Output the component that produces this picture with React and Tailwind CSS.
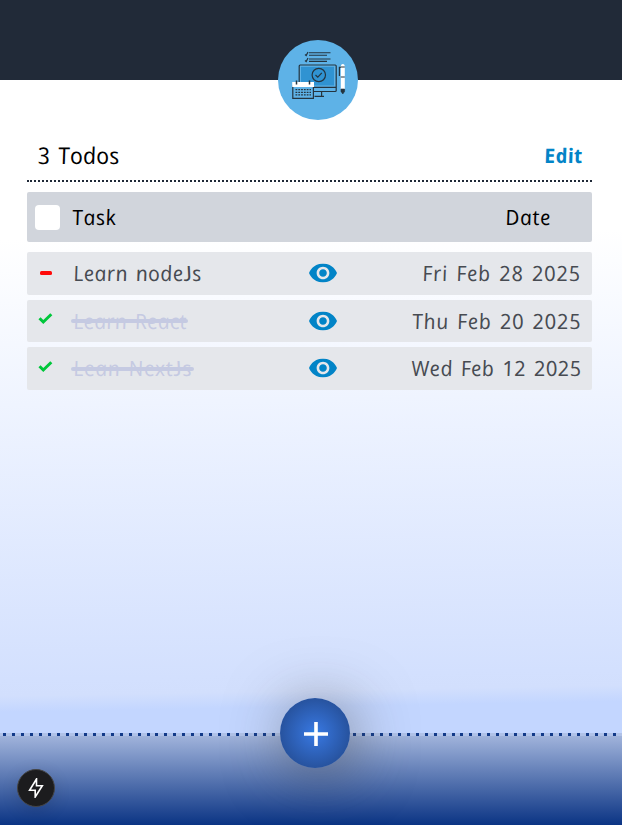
const todos = [
  { name: 'Learn nodeJs', date: 'Fri Feb 28 2025', done: false, height: 'h-[43px]', nameTrack: 'tracking-[0.35px] [word-spacing:2px]', dateTrack: 'tracking-[0.7px] [word-spacing:2px]' },
  { name: 'Learn React', date: 'Thu Feb 20 2025', done: true, height: 'h-[42px]', nameTrack: 'tracking-[0.2px] [word-spacing:2px]', dateTrack: 'tracking-[0.65px] [word-spacing:2px]' },
  { name: 'Lean NextJs', date: 'Wed Feb 12 2025', done: true, height: 'h-[43px]', nameTrack: 'tracking-[0.65px] [word-spacing:2px]', dateTrack: 'tracking-[0.35px] [word-spacing:2px]' },
];

// Italic letterforms stood upright give the rounded, handwritten look.
// The capital J comes from Lato, whose J sits on the baseline.
function Hand({ className = '', children }) {
  const [before, after] = children.split('J');
  return (
    <span className={`inline-block skew-x-[10deg] whitespace-nowrap font-['Open_Sans',sans-serif] italic ${className}`}>
      {before}
      {after !== undefined && <span className="font-['Lato',sans-serif] leading-[0]">J</span>}
      {after}
    </span>
  );
}

function Logo() {
  return (
    <svg className="block h-20 w-20" viewBox="0 0 80 80" fill="none" stroke="#24343f" strokeWidth="1.2">
      <circle cx="40" cy="40" r="40" fill="#5eb2e7" stroke="none" />
      <path d="M27 14.5l1.2 1L30 12M27 20.5l1.2 1L30 18" strokeWidth="1.2" />
      <path d="M31 12.8h21.5M31 15.2h18M31 19h21.5M31 21.4h18" strokeWidth="1.1" />
      <rect x="21.2" y="25" width="37" height="26.5" rx="1" fill="#5eb2e7" />
      <rect x="23" y="26.8" width="33" height="18.7" fill="#3093d2" stroke="none" />
      <path d="M21 47.3h37M43.6 51.5v4.5M36.5 56.3h9.5" />
      <circle cx="40.8" cy="35" r="6.7" />
      <path d="M37.5 35l2.3 2.2 4-4.4" />
      <path d="M14.8 46h20.6v12.4H14.8z" fill="#5eb2e7" />
      <path d="M14.2 42h21.8v5H14.2z" fill="#fff" stroke="none" />
      <path d="M18.5 40.5v4M31.5 40.5v4" strokeWidth="1.5" />
      <path d="M17.5 49.7h15.5M17.5 52.3h15.5M17.5 54.9h15.5" strokeDasharray="1.8 1" strokeWidth="1.2" />
      <path d="M61.4 36v-8.6h2" />
      <path d="M62.8 27q0-3 2-3t2 3v22h-4z" fill="#fff" stroke="none" />
      <path d="M62.8 27h4M62.8 37h4" strokeWidth="1" />
      <path d="M63 49h3.6v2.4L64.8 54 63 51.4z" fill="#24343f" strokeWidth=".6" />
    </svg>
  );
}

function StatusIcon({ done }) {
  return done ? (
    <svg className="block h-3.5 w-4 -translate-y-[2.5px] translate-x-[0.5px]" viewBox="0 0 16 14" fill="none" stroke="#00c73b" strokeWidth="3">
      <path d="M2 6.7l3.8 3.8L13.8 2.7" />
    </svg>
  ) : (
    <span className="block h-1 w-3 -translate-y-px rounded-[1.5px] bg-[#ff0a0a]" />
  );
}

function Eye() {
  return (
    <svg className="block h-[19px] w-[28px] -translate-y-[0.5px]" viewBox="1 4.5 22 15" preserveAspectRatio="none" fill="#0284c7">
      <path d="M12 4.5C7 4.5 2.73 7.61 1 12c1.73 4.39 6 7.5 11 7.5s9.27-3.11 11-7.5c-1.73-4.39-6-7.5-11-7.5zM12 17c-2.76 0-5-2.24-5-5s2.24-5 5-5 5 2.24 5 5-2.24 5-5 5zm0-8c-1.66 0-3 1.34-3 3s1.34 3 3 3 3-1.34 3-3-1.34-3-3-3z" />
    </svg>
  );
}

function TodoRow({ todo }) {
  return (
    <li className={`grid grid-cols-[46px_236px_1fr] items-center rounded-[2px] bg-[#e5e7eb] text-[21px] leading-none text-[#474b52] ${todo.height}`}>
      <span className={todo.done ? 'pl-2.5' : 'pl-[13px]'}><StatusIcon done={todo.done} /></span>
      <span className="flex">
        <span className={`relative ${todo.done ? 'text-[#c5cae2]' : ''}`}>
          <Hand className={todo.nameTrack}>{todo.name}</Hand>
          {todo.done && <span className="absolute -left-0.5 -right-0.5 top-1/2 h-1 -translate-y-1/2 rounded-full bg-[#c5cae2]" />}
        </span>
      </span>
      <span className="flex items-center justify-between pr-[11px]">
        <Eye />
        <Hand className={todo.dateTrack}>{todo.date}</Hand>
      </span>
    </li>
  );
}

export default function App() {
  return (
    <div className="relative flex h-[825px] w-full flex-col overflow-hidden bg-[linear-gradient(179deg,#fff_0px,#fff_240px,#eff4ff_405px,#d3e0fe_680px,#d2dffd_696px,#c3d6ff_712px,#c3d6ff_825px)]">
      <header className="flex h-20 shrink-0 bg-[#212a38] pl-[278px] pt-10">
        <div className="relative z-10 h-20 w-20"><Logo /></div>
      </header>

      <main className="ml-[27px] mr-[30px] flex flex-1 flex-col pt-[52px]">
        <div className="flex h-[50px] items-center justify-between border-b-2 border-dotted border-[#1f2937] pl-2.5 pr-2.5">
          <h1 className="pb-0.5 text-[23px] leading-none text-black"><Hand className="tracking-[0.1px] [word-spacing:2px]">3 Todos</Hand></h1>
          <button className="text-[20px] leading-none text-[#0284c7]"><Hand className="font-bold tracking-[0.4px]">Edit</Hand></button>
        </div>
        <div className="mt-2.5 flex h-[50px] shrink-0 items-center rounded-[2px] bg-[#d1d5dc] pl-2 pr-[41px] text-[21px] leading-none text-black">
          <span className="h-[25px] w-[25px] rounded-[4px] bg-white" />
          <Hand className="ml-3 flex-1 tracking-[0.6px]">Task</Hand>
          <Hand className="tracking-[0.6px]">Date</Hand>
        </div>
        <ul className="mt-2.5 flex flex-col gap-[5px]">
          {todos.map((todo) => <TodoRow key={todo.name} todo={todo} />)}
        </ul>
      </main>

      <footer className="h-[92px] shrink-0 bg-[linear-gradient(#b0c2e8_0px,#b0c2e8_3px,#a0b3db_3px,#0b3484_92px)]">
        <div className="h-[3px] bg-[repeating-linear-gradient(90deg,transparent_0px,transparent_3px,#123a89_3px,#123a89_6px,transparent_6px,transparent_8.97px)]" />
      </footer>

      <button aria-label="Add todo" className="absolute bottom-[57px] left-[280px] flex h-[70px] w-[70px] items-center justify-center rounded-full bg-[radial-gradient(circle,#2388e4_0%,#3571d5_14%,#27539f_70%)] shadow-[5px_5px_60px_rgba(70,70,70,0.6)]">
        <svg className="ml-0.5 mt-px block h-6 w-6" viewBox="0 0 24 24" stroke="#fff" strokeWidth="3.6"><path d="M12 0v24M0 12h24" /></svg>
      </button>
      <button aria-label="Shortcuts" className="absolute bottom-[18px] left-[17px] flex h-[38px] w-[38px] items-center justify-center rounded-full border border-[#454545] bg-[#1c1c1e] shadow-[0_4px_18px_rgba(0,0,0,0.12)]">
        <svg className="block h-5 w-4" viewBox="0 0 16 20" fill="none" stroke="#fff" strokeWidth="1.6"><path d="M8.5 1L1.6 12.3h5.6V19l7.1-11.2H8.5z" /></svg>
      </button>
    </div>
  );
}
